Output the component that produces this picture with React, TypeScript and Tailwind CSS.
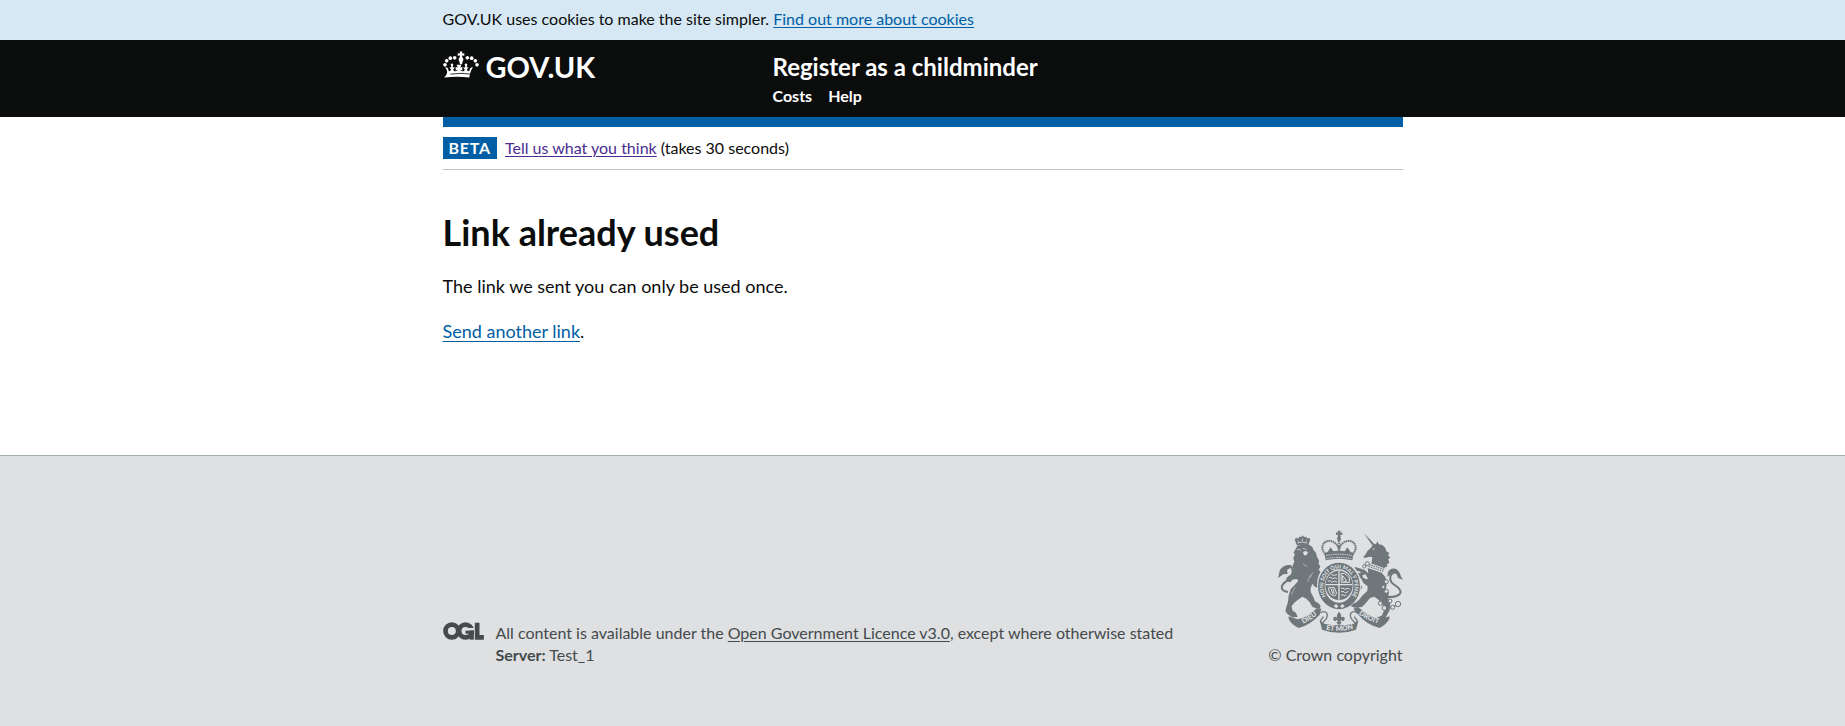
import type { ReactNode } from "react";

const linkBase = "underline decoration-1 underline-offset-2";

function Container({ children, className = "" }: { children: ReactNode; className?: string }) {
  return <div className={`mx-auto w-full max-w-[1020px] px-[30px] ${className}`}>{children}</div>;
}

function Crown() {
  return (
    <svg viewBox="0 0 108 80" className="h-[27px] w-9 fill-current" aria-hidden="true">
      <path d="M50 1h8l-1 6 7-1v8l-7-1 1 6c4 3 4 8 1 12l-2 8h-6l-2-8c-3-4-3-9 1-12l1-6-7 1V6l7 1z" />
      <circle cx="35" cy="20" r="5.5" />
      <circle cx="22" cy="21" r="5.5" />
      <circle cx="11" cy="29" r="5.5" />
      <circle cx="6" cy="41" r="5.5" />
      <circle cx="73" cy="20" r="5.5" />
      <circle cx="86" cy="21" r="5.5" />
      <circle cx="97" cy="29" r="5.5" />
      <circle cx="102" cy="41" r="5.5" />
      <path d="M6 47l9 4c1 5 2 9 4 9 3 0 4-3 5-6l-5-5 6-1-2-8c1-4 7-4 8 0l-2 8 7 1-5 5c0 4 2 6 6 6 4 0 6-1 7-4l-6 2v-11l6 3-3-9h14l-3 9 6-3v11l-6-2c1 3 3 4 7 4 4 0 6-2 6-6l-5-5 7-1-2-8c1-4 7-4 8 0l-2 8 6 1-5 5c1 3 2 6 5 6 2 0 3-4 4-9l9-4c-6 10-9 20-11 32q-37-4-76 0C18 67 12 57 6 47z" />
      <path d="M22 69q32-5 64 0" fill="none" stroke="#0b0c0c" strokeWidth="2.5" />
    </svg>
  );
}

function OglLogo() {
  return (
    <svg viewBox="0 0 122 54" className="h-[18px] w-[41px]" role="img" aria-label="Open Government Licence" fill="none" stroke="#454a4c">
      <circle cx="26" cy="27" r="19" strokeWidth="14" />
      <circle cx="67" cy="27" r="19" strokeWidth="14" />
      <rect x="74" y="18" width="20" height="8" fill="#dee0e2" stroke="none" />
      <rect x="67" y="26" width="25" height="9" fill="#454a4c" stroke="none" />
      <rect x="80" y="26" width="12" height="27" fill="#454a4c" stroke="none" />
      <path d="M95 2h14v37h13v14H95z" fill="#454a4c" stroke="none" />
    </svg>
  );
}

function Crest() {
  return (
    <svg viewBox="54 31 375 309" className="h-[103px] w-[125px]" aria-hidden="true" fill="#6f777b" fontFamily="Lato, sans-serif" fontWeight="900">
      <defs>
        <path id="garter" d="M213 245A47 53 0 1 1 261 245" />
        <path id="scroll-left" d="M114 318Q150 306 184 274" />
        <path id="scroll-mid" d="M190 328Q237 340 288 326" />
        <path id="scroll-right" d="M288 278Q317 302 364 314" />
      </defs>

      {/* imperial crown */}
      <path d="M233 33h9l-1 6 6-1v8l-6-1 1 7h-9l1-7-6 1v-8l6 1z" />
      <circle cx="237" cy="57" r="6" />
      <g fill="none" stroke="#6f777b">
        <path d="M196 104C176 82 193 60 212 64c14 3 23 14 25 26 2-12 11-23 25-26 19-4 36 18 16 40" strokeWidth="6" strokeDasharray="5 1.5" />
        <path d="M237 62v40" strokeWidth="7" strokeDasharray="5 2" />
        <path d="M206 99l6-10 7 10M256 99l6-10 7 10" strokeWidth="7" />
      </g>
      <path d="M193 99q44-11 88 0l-4 23q-40-10-80 0z" />
      <path d="M198 108q39-9 78 0M200 117q37-8 74 0" fill="none" stroke="#dee0e2" strokeWidth="2.5" strokeDasharray="5 2" />

      {/* lion */}
      <path d="M109 74l-5-15 5-5 6 3 2-6 7 1 4-5 4 5 7-1 2 6 6-3 4 5-5 15-4 4q-14-5-29 0z" />
      <path d="M112 70q14-6 29 0M113 62l4 4M141 62l-4 4M127 57v7" fill="none" stroke="#dee0e2" strokeWidth="2.5" />
      <path d="M112 79q16-7 36-4l9 7 3 8 8 10 3 12 6 10-1 10 5 9-5 9 7 8-4 10 8 13 3 13 8 7-3 10-8 3-8-8-14-4-8-10-5 13 0 12 8 15 5 13 11 6 6 9-3 7-12-1-10-5-8-13-10-11-12-6-13 9-11 9-8 10 2 13 11 8 5 12-16 1-14-9-7-9 3-13 5-16 2-19 6-18 14-15 9-11-5-5-13 2-5 7-12-1-1-10 7-8 13-3-3-8 5-11-6 1 4-12 4-9-3-10 5-14-5-2z" />
      <path d="M111 89l12 2M128 86l12 3" stroke="#dee0e2" strokeWidth="2" />
      <path d="M129 97l7-3 8 3-3 7-6 4-4-4z" fill="#dee0e2" />
      <path d="M84 217C60 213 61 198 77 186c20-16 27-33 16-43-8-7-19 2-21 16" fill="none" stroke="#6f777b" strokeWidth="6" />
      <path d="M95 137c-15-4-31 4-36 16l-5 22 16-11 13-2-2-11 10-6z" />
      <path d="M151 165l-8 22M158 158l-6 15M106 203l-13 22M129 133l13 8" fill="none" stroke="#dee0e2" strokeWidth="1.5" />

      {/* unicorn */}
      <path d="M311 39l31 33-6 4z" />
      <path d="M318 102l4-8 11-10 7-12 8 2 4-9 5 9 10 2 9 9 3 10 9 5-4 7 7 7-6 4 3 13-7 2 1 9-7-1-1 11-16-5-28-10 5-9 2-15-8-2-7 2-8 2-4-3z" />
      <circle cx="341" cy="88" r="2.5" fill="#dee0e2" />
      <path d="M325 128l55 20-5 9-52-18z" fill="#dee0e2" />
      <path d="M328 134l46 16M326 140l44 15" fill="none" stroke="#6f777b" strokeWidth="4" strokeDasharray="4 3" />
      <path d="M323 145l42 14 11 13 4 17-2 18 9 11-3 16 7 20-2 18-13 23-14 7-13 0 3-9 13-5 7-15-4-17-11-14-14-11-13 4-13 16-11 11-22 2-12-5 4-10 11 0 9-7 12-15 14-13 1-14-13-10-7-14-11-5-13 5-8-2 3-9 16-7 14 5 6 11 9 5 5-2-8-14-19-8-17-2-4 5-8-5 5-9 16-1 25 8 11 10z" />
      <path d="M317 163l-20 9-1 18 11 12-5 8-14-16 1-25 16-13z" />
      <path d="M384 232c29 1 45-10 34-24-11-13-31-17-27-37 4-15 22-17 24-4" fill="none" stroke="#6f777b" strokeWidth="6" />
      <path d="M383 171c-2-17 8-26 22-24 15 3 15 22 24 33l-15-5-4-12-10-5z" />
      <g fill="#dee0e2" stroke="#6f777b" strokeWidth="3">
        <circle cx="322" cy="132" r="6" />
        <circle cx="313" cy="140" r="5" />
        <circle cx="379" cy="186" r="6" />
        <circle cx="370" cy="202" r="5" />
        <circle cx="379" cy="215" r="6" />
        <circle cx="390" cy="244" r="6" />
        <circle cx="361" cy="251" r="6" />
        <circle cx="373" cy="265" r="7" />
        <circle cx="398" cy="263" r="6" />
        <circle cx="414" cy="253" r="8" />
      </g>
      <path d="M381 264h12M402 259h6" stroke="#6f777b" strokeWidth="3" />

      {/* garter and shield */}
      <ellipse cx="237" cy="196" rx="66" ry="74" fill="#dee0e2" />
      <ellipse cx="237" cy="199" rx="53" ry="60" fill="none" stroke="#6f777b" strokeWidth="20" />
      <text fontSize="16" fill="#dee0e2">
        <textPath href="#garter" startOffset="50%" textAnchor="middle">HONI SOIT QUI MAL Y PENSE</textPath>
      </text>
      <path d="M221 259l7-6 7 7-6 6zM240 260l7-7 7 6-7 6z" fill="#dee0e2" />
      <ellipse cx="237" cy="197" rx="41" ry="44" />
      <path d="M237 154v86M197 195h80" stroke="#dee0e2" strokeWidth="4" />
      <g fill="none" stroke="#dee0e2" strokeWidth="3">
        <path d="M207 174h8l3 4 5-4 8 3M203 184h9l4 4 7-4 8 3M214 165l8 2 9-2M243 206h9l3 4 6-4 8 2M243 216h9l4 4 9-5M243 226h8l3 3 5-4" />
        <path d="M248 168l12 16q-8 5-12-2zM243 161h11l14 13v14h-24z" />
        <path d="M206 204q-1 21 18 25l6-8-7-17zM213 207l6 17M219 207l4 16" />
      </g>

      {/* fleur-de-lis */}
      <path d="M237 276q12 12 3 22 5-10 13-5 4 9-5 12l-4-5-3 7h4l-5 8-6 0-5-8h5l-4-7-4 5q-9-3-5-12 8-5 13 5-8-10 3-22z" />

      {/* motto scroll */}
      <path d="M86 290l27 9q31-6 57-33l14 1-5 18q-28 31-63 40-20-8-30-27z" />
      <path d="M388 290l-27 9q-31-6-67-37l-14 5 15 18q25 30 64 40 18-9 29-27z" />
      <path d="M181 280c14-12 31 3 13 23l-9 9-4-8 9-13M292 280c-14-12-31 3-13 23l9 9 4-8-9-13" fill="none" stroke="#6f777b" strokeWidth="4" />
      <path d="M180 305l13 7q43 9 88 0l14-8-7 26q-51 19-102 0z" />
      <g fill="#dee0e2" fontSize="21">
        <text><textPath href="#scroll-left" startOffset="50%" textAnchor="middle">DIEU</textPath></text>
        <text><textPath href="#scroll-mid" startOffset="50%" textAnchor="middle">ET MON</textPath></text>
        <text><textPath href="#scroll-right" startOffset="50%" textAnchor="middle">DROIT</textPath></text>
      </g>
    </svg>
  );
}

export default function App() {
  return (
    <div className="flex min-h-screen flex-col bg-white font-['Lato',sans-serif] text-base leading-5 text-[#0b0c0c]">
      <div className="bg-[#d5e8f3] pt-[9px] pb-[11px]">
        <Container>
          <p>
            GOV.UK uses cookies to make the site simpler.{" "}
            <a href="#cookies" className={`${linkBase} text-[#005ea5]`}>Find out more about cookies</a>
          </p>
        </Container>
      </div>

      <header className="bg-[#0b0c0c] font-bold text-white">
        <Container className="flex pt-2.5 pb-2">
          <div className="w-[330px] shrink-0">
            <a href="#home" className="flex h-[34px] items-start gap-[7px] pt-px text-[29px] leading-8">
              <Crown />
              <span>GOV.UK</span>
            </a>
          </div>
          <div>
            <a href="#service" className="block text-2xl leading-[34px]">Register as a childminder</a>
            <nav className="mt-0.5 flex h-[23px] gap-4">
              <a href="#costs">Costs</a>
              <a href="#help">Help</a>
            </nav>
          </div>
        </Container>
      </header>

      <main className="grow">
        <Container>
          <div className="h-2.5 bg-[#005ea5]" />
          <div className="flex items-center gap-2 border-b border-[#bfc1c3] py-2.5">
            <strong className="bg-[#005ea5] px-1.5 leading-[22px] tracking-wider text-white">BETA</strong>
            <p>
              <a href="#feedback" className={`${linkBase} text-[#4c2c92]`}>Tell us what you think</a> (takes 30 seconds)
            </p>
          </div>
          <h1 className="mt-[42px] text-4xl font-bold">Link already used</h1>
          <div className="mt-[22px] flex flex-col gap-5 pb-[99px] text-lg leading-[25px]">
            <p>The link we sent you can only be used once.</p>
            <p>
              <a href="#resend" className="text-[#005ea5] underline decoration-1 underline-offset-3">Send another link</a>.
            </p>
          </div>
        </Container>
      </main>

      <footer className="border-t border-[#a1acb2] bg-[#dee0e2] pt-[74px] pb-[60px] text-[#454a4c]">
        <Container className="flex items-end justify-between">
          <div className="flex items-start gap-3">
            <OglLogo />
            <div className="leading-[22px]">
              <p>
                All content is available under the{" "}
                <a href="#licence" className={linkBase}>Open Government Licence v3.0</a>, except where otherwise stated
              </p>
              <p><strong>Server:</strong> Test_1</p>
            </div>
          </div>
          <a href="#copyright" className="flex flex-col items-end gap-[11px] leading-[22px]">
            <Crest />
            <span>© Crown copyright</span>
          </a>
        </Container>
      </footer>
    </div>
  );
}
